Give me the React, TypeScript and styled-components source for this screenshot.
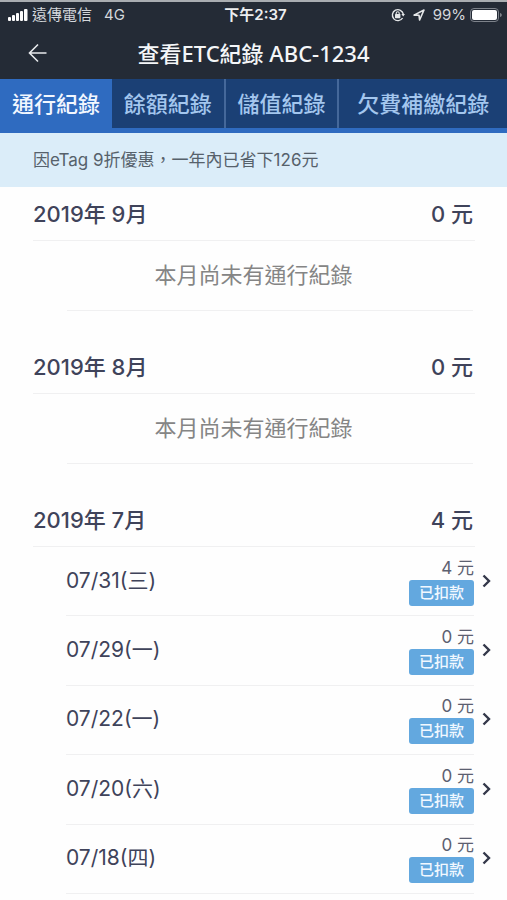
import React, { useState } from 'react';
import styled, { createGlobalStyle } from 'styled-components';

const tabs = [
  { name: '通行紀錄', size: 2 },
  { name: '餘額紀錄', size: 2 },
  { name: '儲值紀錄', size: 2 },
  { name: '欠費補繳紀錄', size: 3 },
];

const months = [
  { title: '2019年 9月', total: 0, days: [] },
  { title: '2019年 8月', total: 0, days: [] },
  {
    title: '2019年 7月',
    total: 4,
    days: [
      { date: '07/31(三)', fee: 4 },
      { date: '07/29(一)', fee: 0 },
      { date: '07/22(一)', fee: 0 },
      { date: '07/20(六)', fee: 0 },
      { date: '07/18(四)', fee: 0 },
    ],
  },
];

const StatusBar = () => (
  <Status>
    <StatusSide>
      <svg width="20" height="12" viewBox="0 0 20 12" fill="#fff">
        <rect x="0" y="8" width="3" height="4" rx="1" />
        <rect x="4" y="6" width="3" height="6" rx="1" />
        <rect x="8" y="4" width="3" height="8" rx="1" />
        <rect x="12" y="2" width="3" height="10" rx="1" />
        <rect x="16" y="0" width="3.5" height="12" rx="1" />
      </svg>
      <Carrier>遠傳電信</Carrier>
      <span>4G</span>
    </StatusSide>
    <Clock>下午2:37</Clock>
    <StatusSide $end>
      {/* 螢幕方向鎖定 */}
      <svg width="14" height="14" viewBox="0 0 14 14" fill="none">
        <path
          d="M11.6 10A5.5 5.5 0 1 1 12.3 6.2"
          stroke="#e4e6e8"
          strokeWidth="1.4"
        />
        <path d="M10.4 6h3.6l-1.8 2.6z" fill="#e4e6e8" />
        <rect x="4" y="6" width="5.4" height="4.2" rx="0.6" fill="#e4e6e8" />
        <path
          d="M5.2 6.4V5.2a1.5 1.5 0 0 1 3 0v1.2"
          stroke="#e4e6e8"
          strokeWidth="1.1"
        />
      </svg>
      {/* 定位 */}
      <LocationIcon width="12" height="12" viewBox="0 0 12 12" fill="none">
        <path
          d="M1 6.1 11 1 6.600 11 6 6.200z"
          stroke="#e4e6e8"
          strokeWidth="1.6"
          strokeLinejoin="round"
        />
      </LocationIcon>
      <span>99%</span>
      <svg width="33" height="14" viewBox="0 0 33 14">
        <rect
          x="0.5"
          y="0.5"
          width="28"
          height="13"
          rx="3.5"
          fill="none"
          stroke="#7d828a"
        />
        <rect x="2" y="2" width="25" height="10" rx="2" fill="#fff" />
        <path d="M30 5v4c1.2-.4 1.8-1.1 1.8-2S31.2 5.4 30 5z" fill="#7d828a" />
      </svg>
    </StatusSide>
  </Status>
);

const App = () => {
  const [current, setCurrent] = useState(0);

  return (
    <Page lang="zh-Hant">
      <GlobalStyle />
      <StatusBar />
      <Header>
        <BackButton type="button" aria-label="返回">
          <svg width="20" height="20" viewBox="0 0 20 20" fill="none">
            <path
              d="M18.5 10H2M10 1.5 1.5 10l8.5 8.5"
              stroke="#e8eaed"
              strokeWidth="1.6"
            />
          </svg>
        </BackButton>
        <Title>查看ETC紀錄 ABC-1234</Title>
      </Header>
      <TabBar>
        {tabs.map((tab, i) => (
          <Tab
            key={tab.name}
            type="button"
            $size={tab.size}
            $active={i === current}
            onClick={() => setCurrent(i)}
          >
            {tab.name}
          </Tab>
        ))}
      </TabBar>
      <Notice>因eTag 9折優惠，一年內已省下126元</Notice>
      <main>
        {months.map((month) => (
          <Month key={month.title}>
            <MonthHeader>
              <MonthTitle>{month.title}</MonthTitle>
              <span>{month.total} 元</span>
            </MonthHeader>
            {month.days.length === 0 ? (
              <Empty>本月尚未有通行紀錄</Empty>
            ) : (
              <DayList>
                {month.days.map((day) => (
                  <Day key={day.date}>
                    <DayButton type="button">
                      <span>{day.date}</span>
                      <Payment>
                        <Fee>{day.fee} 元</Fee>
                        <Badge>已扣款</Badge>
                      </Payment>
                      <Chevron width="9" height="14" viewBox="0 0 9 14">
                        <path
                          d="M1.5 1.5 7 7l-5.500 5.500"
                          fill="none"
                          stroke="#34384a"
                          strokeWidth="2.4"
                        />
                      </Chevron>
                    </DayButton>
                  </Day>
                ))}
              </DayList>
            )}
          </Month>
        ))}
      </main>
    </Page>
  );
};

export default App;

const GlobalStyle = createGlobalStyle`
  * {
    box-sizing: border-box;
  }

  body {
    margin: 0;
    background: #fefefe;
  }

  button {
    border: none;
    padding: 0;
    background: none;
    color: inherit;
    font: inherit;
    cursor: pointer;
  }
`;

const Page = styled.div`
  font-family: Inter, 'Noto Sans CJK TC', sans-serif;
  color: #3f435a;
`;

const Status = styled.div`
  display: grid;
  grid-template-columns: 1fr auto 1fr;
  align-items: center;
  height: 28px;
  border-top: 2px solid #a9adb1;
  padding: 0 4px 0 8px;
  background: #242b36;
  color: #d5d8dc;
  font-size: 15px;
  line-height: 24px;
`;

const StatusSide = styled.div<{ $end?: boolean }>`
  display: flex;
  align-items: center;
  justify-content: ${(props) => (props.$end ? 'flex-end' : 'flex-start')};
  gap: 4px;
`;

const Carrier = styled.span`
  margin-right: 8px;
`;

const Clock = styled.span`
  color: #eceef0;
  font-weight: 600;
`;

const LocationIcon = styled.svg`
  margin: 0 4px;
`;

const Header = styled.header`
  display: grid;
  grid-template-columns: 48px 1fr 48px;
  align-items: center;
  height: 51px;
  padding: 0 14px 2px;
  background: #242b36;
`;

const BackButton = styled.button`
  display: flex;
  align-items: center;
  justify-content: center;
  height: 44px;
`;

const Title = styled.h1`
  margin: 0;
  color: #f4f6f8;
  font-family: 'Noto Sans', 'Noto Sans CJK TC', sans-serif;
  font-size: 22px;
  font-weight: 500;
  line-height: 32px;
  text-align: center;
`;

const TabBar = styled.nav`
  display: flex;
  height: 54px;
  border-bottom: 5px solid #2f6bc0;
  background: #1b4075;
`;

const Tab = styled.button<{ $size: number; $active: boolean }>`
  flex: ${(props) => props.$size} 1 0;
  padding-bottom: 4px;
  background: ${(props) => (props.$active ? '#2f6bc0' : '#1b4075')};
  color: ${(props) => (props.$active ? '#f2f7ff' : '#a3c6ee')};
  font-size: 22px;
  font-weight: 500;
  white-space: nowrap;

  & + & + & {
    border-left: 2px solid #45689a;
  }
`;

const Notice = styled.p`
  margin: 0;
  padding: 15px 33px;
  background: #dbedf9;
  color: #56616b;
  font-size: 17px;
  line-height: 24px;
`;

const Month = styled.section`
  margin-bottom: 29px;
`;

const MonthHeader = styled.div`
  display: flex;
  align-items: center;
  justify-content: space-between;
  height: 54px;
  margin: 0 32px 0 33px;
  border-bottom: 1px solid #f0f0f1;
  padding: 0 2px 4px 0;
  font-size: 22px;
  font-weight: 500;
`;

const MonthTitle = styled.h2`
  margin: 0;
  font-size: 22px;
  font-weight: 500;
`;

const Empty = styled.p`
  margin: 0 34px 0 67px;
  border-bottom: 1px solid #f0f0f1;
  padding: 18px 33px 18px 0;
  color: #858585;
  font-size: 22px;
  line-height: 33px;
  text-align: center;
`;

const DayList = styled.ul`
  display: grid;
  grid-auto-rows: 1fr;
  min-height: 347px;
  margin: 0 16px 0 66px;
  padding: 0;
  list-style: none;
`;

const Day = styled.li`
  display: flex;
  background: linear-gradient(#f0f0f1, #f0f0f1) left bottom / calc(100% - 17px)
    1px no-repeat;
`;

const DayButton = styled.button`
  display: flex;
  flex: 1;
  align-items: center;
  padding-bottom: 2px;
  font-size: 21px;
  line-height: 28px;
`;

const Payment = styled.div`
  display: flex;
  flex-direction: column;
  align-items: flex-end;
  margin-left: auto;
`;

const Fee = styled.span`
  color: #5c6070;
  font-size: 17px;
  line-height: 24px;
`;

const Badge = styled.span`
  border-radius: 3px;
  padding: 0 10px;
  background: #63a8df;
  color: #f1f8ff;
  font-size: 15px;
  font-weight: 500;
  line-height: 26px;
`;

const Chevron = styled.svg`
  margin-left: 8px;
`;
